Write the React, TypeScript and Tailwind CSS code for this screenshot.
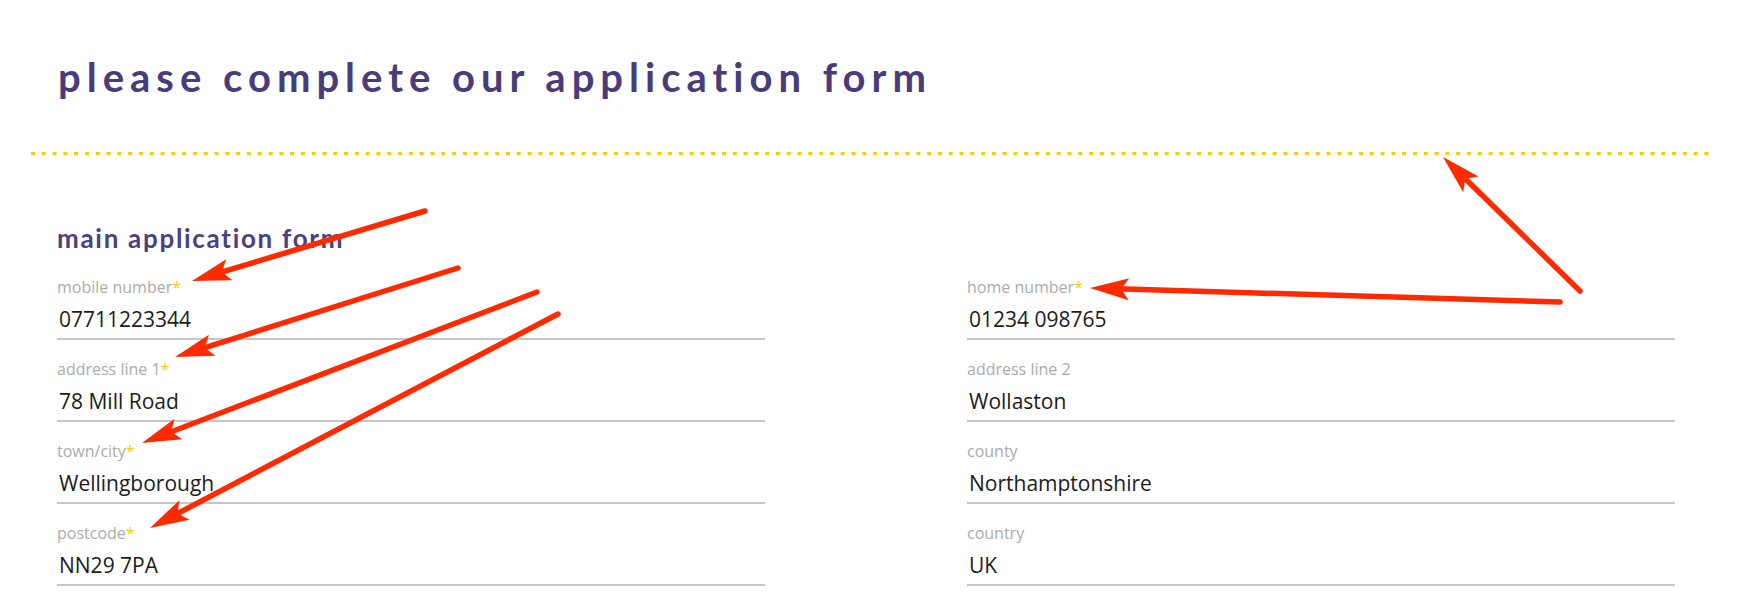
const left = [
  { label: "mobile number", value: "07711223344", required: true },
  { label: "address line 1", value: "78 Mill Road", required: true },
  { label: "town/city", value: "Wellingborough", required: true },
  { label: "postcode", value: "NN29 7PA", required: true },
];

const right = [
  { label: "home number", value: "01234 098765", required: true },
  { label: "address line 2", value: "Wollaston", required: false },
  { label: "county", value: "Northamptonshire", required: false },
  { label: "country", value: "UK", required: false },
];

// annotation arrows drawn over the form: [tailX, tailY, tipX, tipY]
const arrows: [number, number, number, number][] = [
  [425, 211, 192, 281],
  [458, 268, 175, 357],
  [537, 292, 142, 443],
  [558, 314, 150, 528],
  [1560, 302, 1090, 288],
  [1580, 291, 1443, 157],
];

function Field({ label, value, required }: { label: string; value: string; required: boolean }) {
  return (
    <div className="flex flex-col border-b-2 border-[#c6c6c6] pb-[5px]">
      <span className="text-[16px] leading-[22px] text-[#ababab] font-['Open_Sans',sans-serif]">
        {label}
        {required && <span className="text-[#f5cc00]">*</span>}
      </span>
      <span className="mt-[7px] pl-[2px] text-[21px] leading-[28px] text-[#1c1c1c] font-['Open_Sans',sans-serif]">
        {value}
      </span>
    </div>
  );
}

function Arrow({ a }: { a: [number, number, number, number] }) {
  const [x1, y1, x2, y2] = a;
  const dx = x2 - x1;
  const dy = y2 - y1;
  const len = Math.hypot(dx, dy);
  const ux = dx / len;
  const uy = dy / len;
  const nx = -uy;
  const ny = ux;
  const L = 39;
  const W = 11;
  const bx = x2 - ux * L;
  const by = y2 - uy * L;
  const pts = [
    [x2, y2],
    [bx + nx * W, by + ny * W],
    [x2 - ux * L * 0.8, y2 - uy * L * 0.8],
    [bx - nx * W, by - ny * W],
  ]
    .map((p) => p.join(","))
    .join(" ");
  return (
    <g>
      <line
        x1={x1}
        y1={y1}
        x2={x2 - ux * L * 0.7}
        y2={y2 - uy * L * 0.7}
        stroke="#ff2a00"
        strokeWidth={5.5}
        strokeLinecap="round"
      />
      <polygon points={pts} fill="#ff2a00" />
    </g>
  );
}

export default function App() {
  return (
    <div className="relative w-[1749px] h-[606px] bg-white overflow-hidden">
      <div className="px-[31px] pt-[53px]">
        <h1 className="px-[27px] text-[40px] leading-[48px] font-bold tracking-[6px] text-[#483c7a] font-['Lato',sans-serif]">
          please complete our application form
        </h1>

        <div className="mt-[51px] h-[3px] w-[1681px] bg-[linear-gradient(to_right,#f5cf00_34%,transparent_34%)] bg-[length:10.8px_3px] bg-repeat-x" />

        <div className="px-[26px]">
          <h2 className="mt-[68px] text-[26px] leading-[31px] font-bold tracking-[1.7px] text-[#4b4080] font-['Lato',sans-serif]">
            main application form
          </h2>

          <div className="mt-[22px] grid grid-cols-[708px_708px] gap-x-[202px]">
            <div className="flex flex-col gap-[18px]">
              {left.map((f) => (
                <Field key={f.label} {...f} />
              ))}
            </div>
            <div className="flex flex-col gap-[18px]">
              {right.map((f) => (
                <Field key={f.label} {...f} />
              ))}
            </div>
          </div>
        </div>
      </div>

      <svg className="absolute inset-0 pointer-events-none" width={1749} height={606} viewBox="0 0 1749 606">
        {arrows.map((a, i) => (
          <Arrow key={i} a={a} />
        ))}
      </svg>
    </div>
  );
}
